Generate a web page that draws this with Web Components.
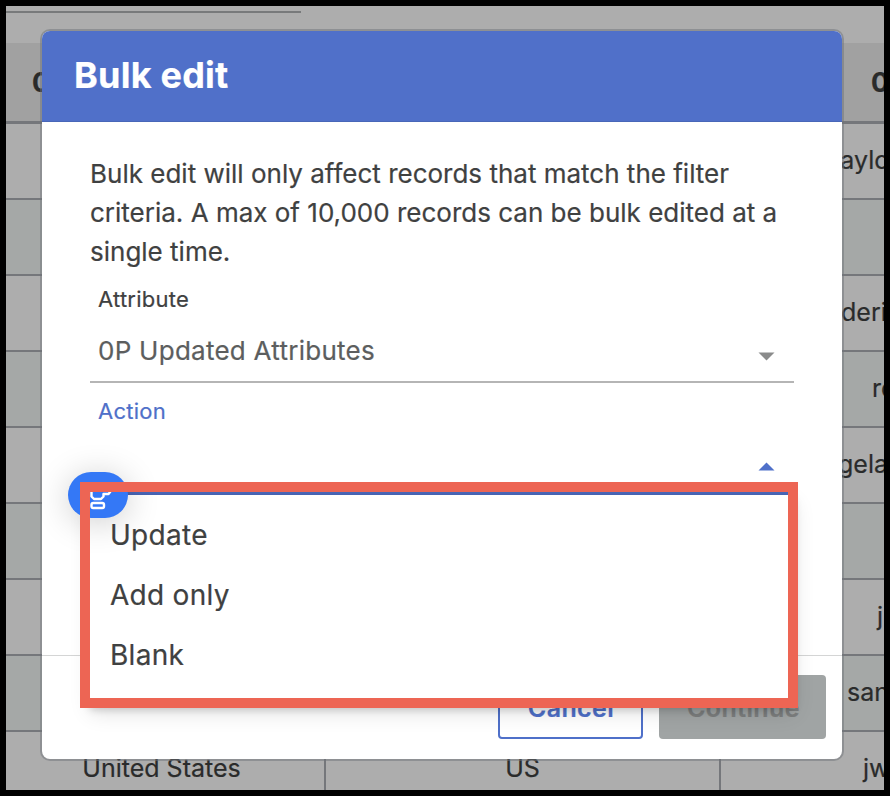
<!DOCTYPE html>
<html lang="en">
<head>
<meta charset="utf-8">
<title>Bulk edit</title>
<style>
  html, body { margin: 0; height: 100%; background: #000; }
  body { font-family: Inter, "Liberation Sans", sans-serif; overflow: hidden; -webkit-text-stroke: 0.2px; }
</style>
</head>
<body>
<records-page></records-page>

<script>
/**
 * Attaches an open shadow root filled from the given markup.
 *
 * @param {HTMLElement} host - The element to fill.
 * @param {string} html - The markup and styles.
 */
function attach (host, html) {
  const template = document.createElement('template')
  template.innerHTML = html
  host.attachShadow({ mode: 'open' }).appendChild(template.content.cloneNode(true))
}

/** One row of the records table. */
customElements.define('record-row', class extends HTMLElement {
  constructor () {
    super()
    attach(this, `
      <style>
        :host {
          display: grid;
          grid-template-columns: 318px 393px 163px;
          column-gap: 2px;
          height: 74px;
          border-bottom: 2px solid #75777b;
          background: #adadad;
          color: #2a2b2b;
          font-size: 25px;
          box-sizing: content-box;
        }
        :host(:nth-of-type(even)) { background: #a5a8a7; }
        .cell {
          display: flex;
          align-items: center;
          justify-content: center;
          box-sizing: border-box;
          padding-bottom: 2px;
          white-space: nowrap;
        }
        .cell:first-of-type { padding-right: 7px; }
        .cell + .cell { box-shadow: -2px 0 #75777b; }
        .last { justify-content: flex-start; padding-left: var(--indent, 0px); }
      </style>
      <div class="cell"><slot name="country"></slot></div>
      <div class="cell"><slot name="code"></slot></div>
      <div class="cell last"><slot></slot></div>
    `)
  }
})

/** The table behind the dialog. */
customElements.define('records-table', class extends HTMLElement {
  constructor () {
    super()
    attach(this, `
      <style>
        :host { display: block; }
        .search { width: 295px; height: 5px; border-bottom: 2px solid #787a7b; margin-bottom: 30px; }
        .head {
          display: flex;
          justify-content: space-between;
          align-items: center;
          height: 78px;
          padding-left: 26px;
          border-bottom: 3px solid #75777b;
          background: #a1a1a1;
          color: #2a2b2b;
          font-size: 27px;
          font-weight: 700;
        }
        .head span:last-child { width: 13px; white-space: nowrap; }
        record-row:last-child { border-bottom: 0; }
      </style>
      <div class="search"></div>
      <div class="head"><span>0</span><span>0</span></div>
      <record-row style="--indent: 111px">taylo</record-row>
      <record-row></record-row>
      <record-row style="--indent: 120px">deri</record-row>
      <record-row style="--indent: 151px">re</record-row>
      <record-row style="--indent: 117px">gela</record-row>
      <record-row></record-row>
      <record-row style="--indent: 156px">j</record-row>
      <record-row style="--indent: 126px">san</record-row>
      <record-row style="--indent: 142px"><span slot="country">United States</span><span slot="code">US</span>jw</record-row>
    `)
  }
})

/** A select field with a label, a value and an underline. */
customElements.define('select-field', class extends HTMLElement {
  constructor () {
    super()
    attach(this, `
      <style>
        :host { display: block; height: 112px; color: #3f4141; }
        .label { height: 36px; padding-left: 8px; font-size: 22px; line-height: 36px; letter-spacing: 0.25px; }
        .control {
          display: flex;
          align-items: center;
          justify-content: space-between;
          box-sizing: border-box;
          height: 66px;
          padding: 3px 19px 0 8px;
          border-bottom: 2px solid #b5b5b5;
          color: #5c5e5e;
          font-size: 26px;
          letter-spacing: 0.26px;
        }
        svg { display: block; width: 17px; height: 9px; fill: #8a8b8b; margin: 11px 0 0 auto; }
        :host([open]) .label { color: #4f70c9; }
        :host([open]) svg { fill: #4f70c9; transform: scaleY(-1); margin-top: 9px; }
        :host([open]) .control { border-bottom: 3px solid #4c69bb; }
      </style>
      <div class="label"><slot name="label"></slot></div>
      <div class="control"><slot></slot><svg viewBox="0 0 17 9"><path d="M.5.5h16l-8 8z"/></svg></div>
    `)
  }
})

/** A dialog button, outlined unless it is disabled. */
customElements.define('dialog-button', class extends HTMLElement {
  constructor () {
    super()
    attach(this, `
      <style>
        :host {
          display: flex;
          align-items: center;
          justify-content: center;
          box-sizing: border-box;
          width: 145px;
          height: 64px;
          padding: 1px 0 0 1px;
          border: 2px solid #4f70c9;
          border-radius: 4px;
          color: #4f70c9;
          font-size: 25px;
          font-weight: 600;
          letter-spacing: 0.4px;
        }
        :host([disabled]) { width: 167px; padding-left: 2px; border: 0; background: #a0a4a4; color: #7c7e7e; }
      </style>
      <slot></slot>
    `)
  }
})

/** The open list of options. */
customElements.define('option-menu', class extends HTMLElement {
  constructor () {
    super()
    attach(this, `
      <style>
        :host { display: flow-root; width: 718px; height: 226px; }
        .panel {
          box-sizing: border-box;
          width: 704px;
          height: 210px;
          margin: 13px 0 0 10px;
          padding: 10px 20px;
          background: #fff;
          box-shadow: 0 4px 8px rgba(0,0,0,.2), 0 8px 20px rgba(0,0,0,.12);
          color: #3f4141;
          font-size: 28px;
          line-height: 60px;
          letter-spacing: 0.28px;
        }
      </style>
      <div class="panel"><slot></slot></div>
    `)
  }
})

/** The round floating helper badge. */
customElements.define('helper-badge', class extends HTMLElement {
  constructor () {
    super()
    attach(this, `
      <style>
        :host {
          display: block;
          width: 60px;
          height: 46px;
          border-radius: 23px;
          background: #3478f6;
          box-shadow: 0 4px 34px rgba(0,0,0,.2);
        }
        svg { display: block; width: 60px; height: 46px; fill: none; stroke: #fff; stroke-width: 2.4; stroke-linejoin: round; }
      </style>
      <svg viewBox="0 0 60 46">
        <path d="M23.500 15v9.500l2.500 2.500h7l2.500-2.500v-2.500h5l2-2.500"/>
        <rect x="23.500" y="31" width="12.500" height="5" rx="1.800"/>
      </svg>
    `)
  }
})

/** The modal with a title bar, a body and a row of actions. */
customElements.define('modal-dialog', class extends HTMLElement {
  constructor () {
    super()
    attach(this, `
      <style>
        :host {
          display: flex;
          flex-direction: column;
          width: 800px;
          height: 728px;
          border-radius: 8px;
          background: #fff;
          box-shadow: 0 0 0 2px rgba(112,115,122,.5);
        }
        header {
          box-sizing: border-box;
          height: 91px;
          padding-left: 32px;
          border-bottom: 1px solid #4867b8;
          border-radius: 8px 8px 0 0;
          background: #5070c9;
          color: #fff;
          font-size: 36px;
          font-weight: 700;
          letter-spacing: 0.22px;
          line-height: 88px;
        }
        main { flex: 1; padding: 32px 48px 0; }
        footer {
          display: flex;
          justify-content: flex-end;
          gap: 16px;
          height: 84px;
          padding: 19px 16px 0 0;
          border-top: 1px solid #d4d5d5;
        }
      </style>
      <header><slot name="title"></slot></header>
      <main><slot></slot></main>
      <footer><slot name="actions"></slot></footer>
    `)
  }
})

/** The whole screen: table, dialog and the layers over it. */
customElements.define('records-page', class extends HTMLElement {
  constructor () {
    super()
    attach(this, `
      <style>
        :host {
          display: block;
          position: relative;
          box-sizing: border-box;
          width: 890px;
          height: 796px;
          border: 6px solid #000;
          overflow: hidden;
          background: #adadad;
        }
        modal-dialog { position: absolute; left: 36px; top: 25px; }
        helper-badge { position: absolute; left: 62px; top: 466px; }
        option-menu { position: absolute; left: 74px; top: 476px; }
        .frame {
          position: absolute;
          left: 74px;
          top: 476px;
          box-sizing: border-box;
          width: 718px;
          height: 226px;
          border: 10px solid #ed6554;
        }
        p { margin: 0 0 10px; color: #3f4141; font-size: 26px; line-height: 39px; white-space: nowrap; }
        option-menu div { white-space: nowrap; }
      </style>
      <records-table></records-table>
      <modal-dialog>
        <span slot="title">Bulk edit</span>
        <p>Bulk edit will only affect records that match the filter<br>criteria. A max of 10,000 records can be bulk edited at a<br>single time.</p>
        <select-field><span slot="label">Attribute</span>0P Updated Attributes</select-field>
        <select-field open><span slot="label">Action</span></select-field>
        <dialog-button slot="actions">Cancel</dialog-button>
        <dialog-button slot="actions" disabled>Continue</dialog-button>
      </modal-dialog>
      <option-menu>
        <div>Update</div>
        <div>Add only</div>
        <div>Blank</div>
      </option-menu>
      <helper-badge></helper-badge>
      <div class="frame"></div>
    `)
  }
})
</script>
</body>
</html>
